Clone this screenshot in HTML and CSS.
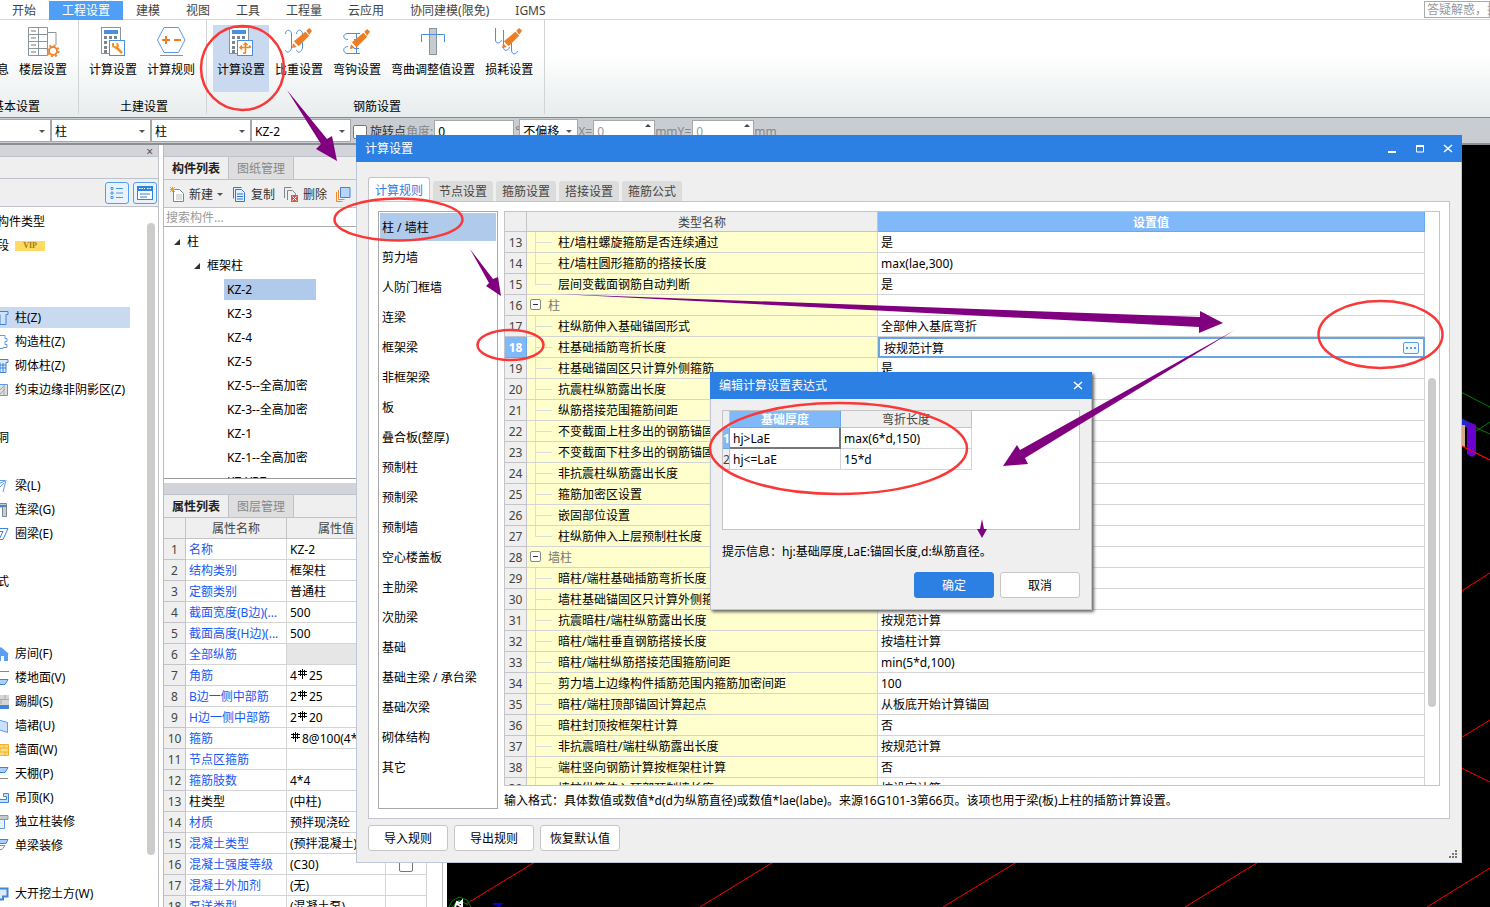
FILE: index.html
```html
<!DOCTYPE html>
<html lang="zh-CN">
<head>
<meta charset="utf-8">
<title>计算设置</title>
<link rel="stylesheet" href="styles.css">
</head>
<body>
<svg class="defs" aria-hidden="true">
  <symbol id="rebar" viewBox="0 0 10 10"><path d="M4.500 0v10M2.500 1v6M6.500 1v6M0 2.500h9M0 5.500h9" fill="none" stroke="#000"/></symbol>
  <symbol id="calc" viewBox="0 0 30 30"><rect x="3.5" y="0.5" width="19" height="26" fill="#fff" stroke="#8a949c"/><rect x="6" y="3" width="14" height="4" fill="#4a8fe0"/><path d="M6 10.5h14M6 15.5h14M6 20.5h5M6 24.500h5" stroke="#7b858d" stroke-width="3" stroke-dasharray="3 2"/></symbol>
  <symbol id="pencil" viewBox="0 0 22 22"><path d="M0 21l1-5 4 4z" fill="#ef7d24"/><path d="M2 14L14 4l4 4L7 19z" fill="#ef7d24"/><path d="M15 3l3-3 3 3-3 4z" fill="#ef7d24"/></symbol>
</svg>
<div class="app">
  <nav class="menu">
    <button>开始</button><button class="on">工程设置</button><button>建模</button><button>视图</button><button>工具</button><button>工程量</button><button>云应用</button><button>协同建模(限免)</button><button>IGMS</button>
    <input class="help" aria-label="搜索" placeholder="答疑解惑，搜索">
  </nav>

  <div class="ribbon">
    <section class="group first">
      <div class="tools">
        <button class="tool"><svg width="30" height="30"></svg>工程信息</button>
        <button class="tool"><svg width="34" height="30" viewBox="0 0 34 30"><path d="M2.500.5h19v28h-19zM12.500 0v28M2 7.500h19M2 14.500h19M2 21.500h19M22 5.500h8V18" fill="none" stroke="#8a949c"/><path d="M5 4h5M5 11h5M5 18h5M5 25h5" stroke="#777"/><circle cx="27" cy="24" r="4" fill="#fff" stroke="#ee8636" stroke-width="2"/><circle cx="27" cy="24" r="5.500" fill="none" stroke="#ee8636" stroke-width="2" stroke-dasharray="2 2.300"/></svg>楼层设置</button>
      </div>
      <h2>基本设置</h2>
    </section>
    <section class="group">
      <div class="tools">
        <button class="tool"><svg width="30" height="30" viewBox="0 0 30 30"><use href="#calc"/><rect x="11.500" y="13.500" width="15" height="15" fill="#fff" stroke="#4a8fe0"/><path d="M18 20l6 6" stroke="#f0912f" stroke-width="2.500"/><path d="M15 16v3l3 2 2-2-1-3" fill="none" stroke="#f0912f" stroke-width="2"/></svg>计算设置</button>
        <button class="tool"><svg width="30" height="30" viewBox="0 0 30 30"><path d="M8 .5h14.500L29 13l-6.500 12.500H8L1.500 13zM4 28.500h23" fill="none" stroke="#5b9bea"/><path d="M6 13h8M10 9v8M18 13h7" stroke="#ef7d24" stroke-width="2"/></svg>计算规则</button>
      </div>
      <h2>土建设置</h2>
    </section>
    <section class="group">
      <div class="tools">
        <button class="tool on"><svg width="30" height="30" viewBox="0 0 30 30"><use href="#calc"/><rect x="11.500" y="13.500" width="15" height="15" fill="#fff" stroke="#4a8fe0"/><path d="M19.500 17v9M17.500 18l2-2 2 2M15 20.500h9M16 18.500l-2 2 2 2M23 18.500l2 2M17 26h3" fill="none" stroke="#f0861f" stroke-width="1.500"/></svg>计算设置</button>
        <button class="tool"><svg width="30" height="30" viewBox="0 0 30 30"><path d="M1.500 7c0-5 6-5 6 0v13c0 5-5 7-6 3M12.500 7c0-5 6-5 6 0v13c0 5-5 7-6 3" fill="none" stroke="#4a8fe0"/><use href="#pencil" x="8" y="1" width="21" height="21"/></svg>比重设置</button>
        <button class="tool"><svg width="30" height="30" viewBox="0 0 30 30"><path d="M18 6.500H5c-5 1-4 6 1 6M18 26.500H5c-5-1-4-7 1-7M14.500 6v20M12 12.500h5M12 21.500h5" fill="none" stroke="#4a8fe0"/><use href="#pencil" x="8" y="2" width="21" height="21"/></svg>弯钩设置</button>
        <button class="tool"><svg width="30" height="30" viewBox="0 0 30 30"><rect x="11.500" y="1.500" width="7" height="26" fill="#c6cbd0" stroke="#8a949c"/><path d="M3.500 15V7.500h23V15" fill="none" stroke="#4a8fe0"/></svg>弯曲调整值设置</button>
        <button class="tool"><svg width="30" height="30" viewBox="0 0 30 30"><path d="M1.500 1v12c0 4 5 4 6 0M9.500 3v17c0 5 5 4 6 0M17.500 14v9c0 5 5 5 6 1" fill="none" stroke="#4a8fe0"/><use href="#pencil" x="8" y="1" width="21" height="21"/></svg>损耗设置</button>
      </div>
      <h2>钢筋设置</h2>
    </section>
  </div>

  <div class="options">
    <span class="combo lead"><select aria-label="楼层"><option></option></select></span>
    <span class="combo"><select aria-label="类别"><option>柱</option></select></span>
    <span class="combo"><select aria-label="类型"><option>柱</option></select></span>
    <span class="combo"><select aria-label="构件"><option>KZ-2</option></select></span>
    <label class="check"><input type="checkbox">旋转点</label>
    <label class="dim">角度:<input class="angle" value="0"></label><span class="deg">°</span>
    <span class="combo short"><select aria-label="偏移"><option>不偏移</option></select></span>
    <label class="dim spin">X=<input value="0"></label><span class="dim">mm</span>
    <label class="dim spin">Y=<input value="0"></label><span class="dim">mm</span>
  </div>

  <main class="work">
    <aside class="nav">
      <div class="cap"><button aria-label="关闭">×</button></div>
      <div class="blank"></div>
      <div class="views">
        <button aria-label="列表"><svg width="14" height="14" viewBox="0 0 14 14"><path d="M1 1.500h2v2H1zM1 6h2v2H1zM1 10.500h2v2H1zM6 2.500h7M6 7h7M6 11.500h7" fill="none" stroke="#4a97ea"/></svg></button>
        <button aria-label="窗口"><svg width="16" height="14" viewBox="0 0 16 14"><rect x=".5" y=".5" width="15" height="13" fill="#fff" stroke="#2e83de"/><path d="M0 0h16v5H0z" fill="#2e83de"/><path d="M2 2.500h6M10 2.500h4" stroke="#fff" stroke-dasharray="1.500 1"/><path d="M3 8h10M3 11h7" stroke="#2e83de"/></svg></button>
      </div>
      <div class="navbody">
        <ul class="types">
          <li>构件类型</li>
          <li>段<b class="vip">VIP</b></li>
          <li></li><li></li>
          <li class="sel"><svg viewBox="0 0 12 14"><path d="M0 .5h11v3h-2v10H3v-10" fill="#cfe2fa" stroke="#3f86d8"/></svg>柱(Z)</li>
          <li><svg viewBox="0 0 12 14"><path d="M2 .5h6v3h2v3H8v3h2v3H6v1H2" fill="#fff" stroke="#5b9bea"/></svg>构造柱(Z)</li>
          <li><svg viewBox="0 0 12 14"><path d="M0 .5h11v3h-2v10H3v-10M3 6h6M3 9h6M6 4v9" fill="#dceafa" stroke="#3f86d8"/></svg>砌体柱(Z)</li>
          <li><svg viewBox="0 0 12 14"><path d="M0 1.500h10.500v11H0" fill="#ddd" stroke="#5b9bea"/><path d="M1 9l6-6M2 12l6-6M7 2v10" stroke="#aaa"/></svg>约束边缘非阴影区(Z)</li>
          <li></li><li>洞</li><li></li>
          <li><svg viewBox="0 0 12 14"><path d="M0 1.500h8M9 1L6 13M1 5l7-3M2 9l5-5" fill="none" stroke="#5b9bea"/></svg>梁(L)</li>
          <li><svg viewBox="0 0 12 14"><path d="M0 .5h9.500v13h-4V4H0z" fill="#c8cdd2" stroke="#7b8790"/><path d="M0 3h9" stroke="#3f86d8" stroke-width="2"/></svg>连梁(G)</li>
          <li><svg viewBox="0 0 12 14"><path d="M0 1.500h11l-5 11H2l4-8H0" fill="#fff" stroke="#3f86d8"/></svg>圈梁(E)</li>
          <li></li><li>式</li><li></li><li></li>
          <li><svg viewBox="0 0 12 14"><path d="M0 4l4-4 8 7h-1v7H7V9H4v5H0z" fill="#5c9ff0"/></svg>房间(F)</li>
          <li><svg viewBox="0 0 12 14"><path d="M0 .5h12" stroke="#888"/><path d="M0 8.500h11l-3 5H0z" fill="#a9ceff" stroke="#3f86d8"/></svg>楼地面(V)</li>
          <li><svg viewBox="0 0 12 14"><path d="M0 0h12v10H0z" fill="#d5d5d5"/><path d="M0 4.500h12M8 0v4M4 5v4" stroke="#aaa"/><path d="M0 10h12v4H0z" fill="#3f86d8"/></svg>踢脚(S)</li>
          <li><svg viewBox="0 0 12 14"><path d="M0 .5l10.500 3v10L0 10" fill="#cbe1fb" stroke="#5b9bea"/></svg>墙裙(U)</li>
          <li><svg viewBox="0 0 12 14"><path d="M0 1.500h11.500v11H0M0 5h11M0 9h11M7 1v4M3 5v4M8 9v4" fill="#ffe08a" stroke="#f5ae1c"/></svg>墙面(W)</li>
          <li><svg viewBox="0 0 12 14"><path d="M0 .5h11l-3 5H0z" fill="#a9ceff" stroke="#3f86d8"/><path d="M0 11.500h11" stroke="#888"/></svg>天棚(P)</li>
          <li><svg viewBox="0 0 12 14"><path d="M0 11.500h11.500v-9h-5v3h3v3H0z" fill="#cfe2fa" stroke="#3f86d8"/></svg>吊顶(K)</li>
          <li><svg viewBox="0 0 12 14"><path d="M0 .5h11v4H0z" fill="#c5cacd" stroke="#8a949c"/><path d="M2.500 4.500h5v9h-5z" fill="#e9f2fd" stroke="#5b9bea"/></svg>独立柱装修</li>
          <li><svg viewBox="0 0 12 14"><path d="M0 .5h11l-2 4H0z" fill="#a9ceff" stroke="#3f86d8"/><path d="M0 6.500h8l-3 4H3l-1 3" fill="none" stroke="#8a949c"/></svg>单梁装修</li>
          <li></li>
          <li><svg viewBox="0 0 12 14"><path d="M0 1.500h10.500v8H6v3H1" fill="#dceafa" stroke="#3f86d8" stroke-width="2"/></svg>大开挖土方(W)</li>
        </ul>
        <i class="bar"></i>
      </div>
    </aside>

    <section class="side">
      <div class="cap"></div>
      <div class="tabs"><button class="on">构件列表</button><button>图纸管理</button></div>
      <div class="acts">
        <button><svg width="15" height="15" viewBox="0 0 15 15"><path d="M3.500 2.500h6l4 4v8h-10z" fill="#fff" stroke="#7b8790"/><path d="M6 8h6M6 10h6M6 12h6" stroke="#bbb"/><path d="M0 0l5 5M5 0L0 5M2.500 0v5M0 2.500h5" stroke="#f09a2c"/></svg>新建<i class="tri"></i></button>
        <button><svg width="15" height="15" viewBox="0 0 15 15"><path d="M1.500 11.500V.5h8M3.500 2.500h6l3 3v9h-9z" fill="#e4effd" stroke="#2f79cf"/><path d="M5 7h6M5 9.500h6M5 12h6" stroke="#2f79cf"/></svg>复制</button>
        <button><svg width="15" height="15" viewBox="0 0 15 15"><path d="M.5 11V.5h7M3.500 13V3.500h5l3 3V8" fill="none" stroke="#7b8790"/><path d="M7 8h7v7H7z" fill="#d9534f"/><path d="M8.500 9.500l4 4M12.500 9.500l-4 4" stroke="#fff"/></svg>删除</button>
        <button aria-label="层间复制"><svg width="15" height="15" viewBox="0 0 15 15"><path d="M.5 5v9.500h6M2.500 3v9.500h6" fill="none" stroke="#ee8636"/><path d="M4.500.5h9.500v10H4.500z" fill="#b6d5fc" stroke="#3f86d8"/></svg></button>
      </div>
      <input class="find" aria-label="搜索构件" placeholder="搜索构件...">
      <ul class="tree">
        <li class="l1"><i></i>柱</li>
        <li class="l2"><i></i>框架柱</li>
        <li><span class="sel">KZ-2</span></li><li><span>KZ-3</span></li><li><span>KZ-4</span></li><li><span>KZ-5</span></li><li><span>KZ-5--全高加密</span></li><li><span>KZ-3--全高加密</span></li><li><span>KZ-1</span></li><li><span>KZ-1--全高加密</span></li><li><span>KZ-YBZ</span></li>
      </ul>
      <div class="cap low"></div>
      <div class="tabs"><button class="on">属性列表</button><button>图层管理</button></div>
      <div class="propbox">
      <table class="grid props">
        <colgroup><col class="c0"><col class="c1"><col class="c2"><col class="c3"></colgroup>
        <tr><th></th><th>属性名称</th><th>属性值</th><th>附加</th></tr>
        <tr><th>1</th><td>名称</td><td>KZ-2</td><td></td></tr>
        <tr><th>2</th><td>结构类别</td><td>框架柱</td><td></td></tr>
        <tr><th>3</th><td>定额类别</td><td>普通柱</td><td></td></tr>
        <tr><th>4</th><td>截面宽度(B边)(...</td><td>500</td><td></td></tr>
        <tr><th>5</th><td>截面高度(H边)(...</td><td>500</td><td></td></tr>
        <tr><th>6</th><td>全部纵筋</td><td class="off"></td><td></td></tr>
        <tr><th>7</th><td>角筋</td><td>4<svg class="rb"><use href="#rebar"/></svg>25</td><td></td></tr>
        <tr><th>8</th><td>B边一侧中部筋</td><td>2<svg class="rb"><use href="#rebar"/></svg>25</td><td></td></tr>
        <tr><th>9</th><td>H边一侧中部筋</td><td>2<svg class="rb"><use href="#rebar"/></svg>20</td><td></td></tr>
        <tr><th>10</th><td>箍筋</td><td><svg class="rb"><use href="#rebar"/></svg>8@100(4*4)</td><td></td></tr>
        <tr><th>11</th><td>节点区箍筋</td><td></td><td></td></tr>
        <tr><th>12</th><td>箍筋肢数</td><td>4*4</td><td></td></tr>
        <tr><th>13</th><td class="blk">柱类型</td><td>(中柱)</td><td></td></tr>
        <tr><th>14</th><td>材质</td><td>预拌现浇砼</td><td></td></tr>
        <tr><th>15</th><td>混凝土类型</td><td>(预拌混凝土)</td><td></td></tr>
        <tr><th>16</th><td>混凝土强度等级</td><td>(C30)</td><td class="tick"><input type="checkbox" aria-label="附加"></td></tr>
        <tr><th>17</th><td>混凝土外加剂</td><td>(无)</td><td></td></tr>
        <tr><th>18</th><td>泵送类型</td><td>(混凝土泵)</td><td></td></tr>
      </table>
      </div>
    </section>

    <section class="view3d" aria-label="三维视图">
      <svg viewBox="447 145 1043 762" preserveAspectRatio="xMinYMin slice">
        <g stroke="#f00" fill="none"><path d="M466 904L540 859M700 907L780 858M943 907L1025 857M1185 907L1490 720M1427 907L1490 868M1455 595L1490 573M1455 765L1490 782M1455 443L1490 460"/></g>
        <g stroke="#007d00" fill="none"><path d="M1455 389L1490 407M1470 425l20 9M1476 431l14-9"/><path d="M449 907l3-6 7-4 8 3 4 7M452 907l7-7 9 5"/></g>
        <path d="M1455 415l20 10-14 4-6-2z" fill="#2525cd"/><path d="M1455 425h10v22l-10-3z" fill="#d3aa88"/><path d="M1467 426l4-3 5 2v29l-4 3-5-3z" fill="#6a00d0"/><path d="M1462 446l28 14" stroke="#f00"/>
        <path d="M455 907l2-5 3 1 2-2v6M457 904l5 3" stroke="#fff" stroke-width="2" fill="none"/><path d="M493 904h8l-4 4" stroke="#0000d0" stroke-width="2" fill="none"/>
      </svg>
    </section>
  </main>
</div>

<section class="window settings" role="dialog" aria-label="计算设置">
  <header><h1>计算设置</h1>
    <button aria-label="最小化"><svg width="10" height="10" viewBox="0 0 10 10"><path d="M1 8h8" stroke="#fff" stroke-width="2"/></svg></button>
    <button aria-label="最大化"><svg width="10" height="10" viewBox="0 0 10 10"><path d="M1.500 2h7v6h-7z" fill="none" stroke="#fff"/><path d="M1 2h8" stroke="#fff" stroke-width="2"/></svg></button>
    <button aria-label="关闭"><svg width="10" height="10" viewBox="0 0 10 10"><path d="M1 1l8 7M9 1L1 8" stroke="#fff" stroke-width="1.500"/></svg></button>
  </header>
  <div class="content">
    <div class="stabs"><button class="on">计算规则</button><button>节点设置</button><button>箍筋设置</button><button>搭接设置</button><button>箍筋公式</button></div>
    <div class="sheet">
      <ul class="cats"><li class="sel">柱 / 墙柱</li><li>剪力墙</li><li>人防门框墙</li><li>连梁</li><li>框架梁</li><li>非框架梁</li><li>板</li><li>叠合板(整厚)</li><li>预制柱</li><li>预制梁</li><li>预制墙</li><li>空心楼盖板</li><li>主肋梁</li><li>次肋梁</li><li>基础</li><li>基础主梁 / 承台梁</li><li>基础次梁</li><li>砌体结构</li><li>其它</li></ul>
      <div class="right">
        <div class="gridbox">
          <table class="grid rules">
            <colgroup><col class="c0"><col class="c1"><col></colgroup>
            <tr><th></th><th>类型名称</th><th class="hot">设置值</th></tr>
            <tr><th>13</th><td>柱/墙柱螺旋箍筋是否连续通过</td><td>是</td></tr>
            <tr><th>14</th><td>柱/墙柱圆形箍筋的搭接长度</td><td>max(lae,300)</td></tr>
            <tr class="last"><th>15</th><td>层间变截面钢筋自动判断</td><td>是</td></tr>
            <tr class="grp"><th>16</th><td><i></i>柱</td><td></td></tr>
            <tr><th>17</th><td>柱纵筋伸入基础锚固形式</td><td>全部伸入基底弯折</td></tr>
            <tr><th class="hot">18</th><td>柱基础插筋弯折长度</td><td class="edit"><div><input aria-label="柱基础插筋弯折长度" value="按规范计算"><button aria-label="编辑表达式"><i></i><i></i><i></i></button></div></td></tr>
            <tr><th>19</th><td>柱基础锚固区只计算外侧箍筋</td><td>是</td></tr>
            <tr><th>20</th><td>抗震柱纵筋露出长度</td><td>按规范计算</td></tr>
            <tr><th>21</th><td>纵筋搭接范围箍筋间距</td><td>min(5*d,100)</td></tr>
            <tr><th>22</th><td>不变截面上柱多出的钢筋锚固</td><td>1.2*lae</td></tr>
            <tr><th>23</th><td>不变截面下柱多出的钢筋锚固</td><td>1.2*lae</td></tr>
            <tr><th>24</th><td>非抗震柱纵筋露出长度</td><td>按规范计算</td></tr>
            <tr><th>25</th><td>箍筋加密区设置</td><td>按规范计算</td></tr>
            <tr><th>26</th><td>嵌固部位设置</td><td>按设定计算</td></tr>
            <tr class="last"><th>27</th><td>柱纵筋伸入上层预制柱长度</td><td>8*d</td></tr>
            <tr class="grp"><th>28</th><td><i></i>墙柱</td><td></td></tr>
            <tr><th>29</th><td>暗柱/端柱基础插筋弯折长度</td><td>按规范计算</td></tr>
            <tr><th>30</th><td>墙柱基础锚固区只计算外侧箍筋</td><td>否</td></tr>
            <tr><th>31</th><td>抗震暗柱/端柱纵筋露出长度</td><td>按规范计算</td></tr>
            <tr><th>32</th><td>暗柱/端柱垂直钢筋搭接长度</td><td>按墙柱计算</td></tr>
            <tr><th>33</th><td>暗柱/端柱纵筋搭接范围箍筋间距</td><td>min(5*d,100)</td></tr>
            <tr><th>34</th><td>剪力墙上边缘构件插筋范围内箍筋加密间距</td><td>100</td></tr>
            <tr><th>35</th><td>暗柱/端柱顶部锚固计算起点</td><td>从板底开始计算锚固</td></tr>
            <tr><th>36</th><td>暗柱封顶按框架柱计算</td><td>否</td></tr>
            <tr><th>37</th><td>非抗震暗柱/端柱纵筋露出长度</td><td>按规范计算</td></tr>
            <tr><th>38</th><td>端柱竖向钢筋计算按框架柱计算</td><td>否</td></tr>
            <tr><th>39</th><td>墙柱纵筋伸入顶部预制墙长度</td><td>按设定计算</td></tr>
          </table>
          <div class="track"><i></i></div>
        </div>
        <p>输入格式：具体数值或数值*d(d为纵筋直径)或数值*lae(labe)。来源16G101-3第66页。该项也用于梁(板)上柱的插筋计算设置。</p>
      </div>
    </div>
    <footer><button class="btn">导入规则</button><button class="btn">导出规则</button><button class="btn">恢复默认值</button>
      <svg class="grip" width="9" height="9" viewBox="0 0 9 9"><path d="M6 0h2v2H6zM6 3h2v2H6zM3 3h2v2H3zM0 6h2v2H0zM3 6h2v2H3zM6 6h2v2H6z" fill="#777"/></svg></footer>
  </div>
</section>

<section class="window expr" role="dialog" aria-label="编辑计算设置表达式">
  <header><h1>编辑计算设置表达式</h1><button aria-label="关闭"><svg width="10" height="10" viewBox="0 0 10 10"><path d="M1 1l8 7M9 1L1 8" stroke="#fff" stroke-width="1.500"/></svg></button></header>
  <div class="content">
    <div class="exprbox">
      <table class="grid cond">
        <colgroup><col class="c0"><col class="c1"><col class="c2"></colgroup>
        <tr><th></th><th class="hot">基础厚度</th><th>弯折长度</th></tr>
        <tr><th class="hot">1</th><td class="cur">hj&gt;LaE</td><td>max(6*d,150)</td></tr>
        <tr><th>2</th><td>hj&lt;=LaE</td><td>15*d</td></tr>
      </table>
    </div>
    <p>提示信息：hj:基础厚度,LaE:锚固长度,d:纵筋直径。</p>
    <footer><button class="btn ok">确定</button><button class="btn">取消</button></footer>
  </div>
</section>

<svg class="marks" aria-hidden="true">
  <g fill="none" stroke="#fb3838" stroke-width="2.500">
    <ellipse cx="242.500" cy="68" rx="41.500" ry="42"/><ellipse cx="398.500" cy="219.500" rx="64" ry="21"/><ellipse cx="510.500" cy="345" rx="33" ry="15"/><ellipse cx="1380.500" cy="334.500" rx="62" ry="33.500"/><ellipse cx="838.500" cy="448.500" rx="128.500" ry="45.500"/>
  </g>
  <g fill="#800080">
    <path d="M287 90L327 139 332 136 337 161 316 149 321 144z"/>
    <path d="M470 249L493 279 498 277 501 296 486 286 489 283z"/>
    <path d="M558 294L1200 317V311L1223 323 1199 333V327z"/>
    <path d="M1235 330L1025 458 1028 464 1003 466 1017 445 1020 450z"/>
    <path d="M982 519L984 529H987L982 538 977 529H980z"/>
  </g>
</svg>
</body>
</html>
```
FILE: styles.css
```css
* { box-sizing: border-box; }
body { margin: 0; overflow: hidden; font: 12px/20px "Noto Sans", "Noto Sans CJK SC", sans-serif; color: #000; background: #fff; }
button, input, select { font: inherit; color: inherit; margin: 0; padding: 0; border: 0; background: none; border-radius: 0; }
ul, h1, h2, p { margin: 0; padding: 0; list-style: none; font-size: 12px; font-weight: 400; }
svg { display: block; flex: none; }
.defs { position: absolute; width: 0; height: 0; }
.app { display: flex; flex-direction: column; height: 100vh; overflow: hidden; }

.menu { display: flex; height: 20px; background: #fff; border-bottom: 1px solid #d5d5d5; color: #444; }
.menu button { padding: 2px 13px 0; line-height: 18px; white-space: nowrap; }
.menu button:first-child { padding-left: 12px; }
.menu .on { background: #4e9ff5; color: #fff; margin-top: 1px; padding-top: 1px; height: 19px; }
.help { margin: 1px 0 0 auto; width: 66px; height: 17px; border: 1px solid #aaa; padding-left: 2px; }
::placeholder { color: #999; opacity: 1; }

.ribbon { display: flex; height: 98px; background: linear-gradient(#fff 35%, #e7ecec); border-bottom: 1px solid #84898b; }
.group { display: flex; flex-direction: column; padding: 5px 7px 0 6px; border-right: 1px solid #d0d4d6; margin-bottom: 3px; }
.first { margin-left: -47px; padding-left: 4px; }
.tools { display: flex; gap: 2px; }
.tool { display: flex; flex-direction: column; align-items: center; height: 67px; padding: 2px 4px 0; gap: 3px; white-space: nowrap; }
.tool.on { background: #c8d9f0; }
.group h2 { text-align: center; line-height: 30px; padding-left: 4px; }

.options { display: flex; align-items: center; height: 27px; background: #c9ccd1; border-bottom: 2px solid #8c8f93; }
.combo { position: relative; width: 100px; height: 23px; }
.combo::after, .tri { content: ""; border: 3px solid transparent; border-top-color: #555; border-bottom: 0; }
.combo::after { position: absolute; right: 6px; top: 11px; pointer-events: none; }
.combo select { appearance: none; width: 100%; height: 23px; background: #fff; border: 1px solid #a5a7aa; padding: 2px 0 0 3px; }
.lead { margin-left: -49px; }
.short { width: 59px; }
.check { display: flex; align-items: center; gap: 3px; margin-left: 2px; padding-top: 2px; color: #333; }
.check input, .tick input { appearance: none; width: 14px; height: 14px; border: 1px solid #777; border-radius: 2px; background: #fff; }
.dim { color: #85888c; white-space: nowrap; padding-top: 2px; }
.dim input { width: 62px; height: 23px; border: 1px solid #a5a7aa; background: #fff; padding-left: 3px; color: #999; margin-left: 1px; }
.dim .angle { width: 80px; color: #000; }
.deg { color: #777; margin-left: 1px; width: 4px; }
.spin { position: relative; }
.spin::after { content: ""; position: absolute; right: 4px; top: 6px; border: 3px solid transparent; border-bottom-color: #444; border-top: 0; }

.work { display: flex; flex: 1; min-height: 0; }
.nav { width: 159px; border-right: 1px solid #c0c2c8; margin-right: 4px; display: flex; flex-direction: column; flex: none; overflow: hidden; }
.cap { height: 12px; flex: none; background: #d2d4da; border-bottom: 1px solid #bfc2c9; text-align: right; }
.cap button { display: block; margin-left: auto; padding: 1px 5px 0 0; line-height: 12px; color: #555; }
.blank { height: 22px; background: #efefef; border-bottom: 1px solid #bfc2c9; flex: none; }
.views { height: 28px; flex: none; background: #efefef; border-bottom: 1px solid #bfc2c9; display: flex; justify-content: flex-end; align-items: center; gap: 4px; padding-right: 1px; }
.views button { display: grid; place-items: center; width: 24px; height: 22px; border: 1px solid #4e9ff5; border-radius: 3px; background: #eaf3fd; }
.navbody { display: flex; flex: 1; min-height: 0; }
.types { width: 130px; flex: none; padding-top: 3px; }
.types li { display: flex; align-items: center; gap: 6px; height: 24px; margin-left: -3px; white-space: nowrap; }
.types li.sel { background: #c8d9f0; background-clip: content-box; padding: 1px 0 2px; }
.types svg { width: 12px; height: 14px; }
.vip { width: 30px; height: 10px; background: #fedb63; color: #a5781a; font: bold 8px/10px "Liberation Serif", serif; text-align: center; }
.bar { width: 8px; margin: 16px 0 52px 17px; border-radius: 4px; background: #ccc; }

.side { width: 280px; flex: none; display: flex; flex-direction: column; border: solid #bbb; border-width: 0 1px; overflow: hidden; margin-right: 4px; }
.tabs { display: flex; flex: none; height: 23px; background: #efefef; border-bottom: 1px solid #bfc2c9; }
.tabs button { width: 65px; border-right: 1px solid #bfc2c9; color: #888; background: #dedede; padding-top: 2px; }
.tabs .on { background: #efefef; color: #222; font-weight: 700; }
.acts { display: flex; align-items: center; height: 28px; flex: none; gap: 9px; padding: 2px 0 0 6px; background: #efefef; border-bottom: 1px solid #bfc2c9; color: #333; }
.acts button { display: flex; align-items: center; gap: 4px; white-space: nowrap; }
.find { height: 19px; flex: none; border-bottom: 1px solid #aaa; padding: 2px 0 0 2px; }
.tree { height: 252px; flex: none; overflow: hidden; padding-top: 2px; border-bottom: 1px solid #999; }
.tree li { display: flex; align-items: center; height: 24px; padding-left: 60px; }
.tree span { width: 92px; padding-left: 3px; line-height: 21px; white-space: nowrap; }
.tree .sel { background: #b0caec; }
.tree i { border: 3px solid #333; border-left-color: transparent; border-top-color: transparent; margin-right: 7px; }
.tree .l1 { padding: 1px 0 0 10px; }
.tree .l2 { padding: 1px 0 0 30px; }
.low { margin-top: 4px; }
.propbox { overflow: hidden; flex: 1; }

.grid { border-collapse: separate; border-spacing: 0; table-layout: fixed; }
.grid th, .grid td { height: 21px; padding: 2px 0 0; line-height: 18px; border: solid #d4d4d4; border-width: 0 1px 1px 0; white-space: nowrap; overflow: hidden; text-align: left; }
.grid th { font-weight: 400; text-align: center; background: #efefef; color: #444; border-color: #c3c3c8; }
.grid td { padding-left: 3px; }
.grid th.hot { background: #7fb9fa; color: #fff; font-weight: 700; border-color: #68a9ea; }
.props { width: 263px; }
.props .c0 { width: 22px; }
.props .c1 { width: 101px; }
.props .c2 { width: 99px; }
.props .c3 { width: 41px; }
.props td:nth-child(2) { color: #1758f5; }
.props td.blk { color: #000; }
.props .off { background: #e6e6e6; }
.props .tick { padding: 0; text-align: center; }
.tick input { vertical-align: middle; }
.rb { display: inline-block; width: 10px; height: 10px; margin: 0 1px; vertical-align: 1px; }

.view3d { flex: 1; min-width: 0; background: #000; overflow: hidden; }
.view3d svg { width: 100%; height: 100%; }

.window { position: absolute; display: flex; flex-direction: column; background: #efefef; border: 1px solid #bfc6d6; border-top: 0; }
.window header { display: flex; align-items: center; height: 27px; flex: none; margin: 0 -1px; padding: 0 9px; background: #2d80e3; color: #fff; }
.window h1 { flex: 1; }
.window header button { width: 10px; height: 10px; margin-left: 18px; }
.window .content { display: flex; flex-direction: column; flex: 1; min-height: 0; padding: 15px 11px 11px; }
.settings { left: 356px; top: 135px; right: 28px; bottom: 44px; }
.stabs { display: flex; align-items: flex-end; gap: 3px; height: 25px; flex: none; margin-bottom: -1px; }
.stabs button { width: 60px; height: 20px; margin-bottom: 1px; padding-top: 1px; border-radius: 3px 3px 0 0; background: #dcdcdc; color: #444; }
.stabs .on { width: 62px; height: 25px; margin: 0; padding-top: 2px; background: #fff; border: 1px solid #c3c3c8; border-bottom: 0; color: #2d80e3; }
.sheet { display: flex; gap: 6px; flex: 1; min-height: 0; background: #fff; border: 1px solid #c3c6cc; padding: 9px; }
.cats { width: 120px; flex: none; border: 1px solid #aaa; overflow: hidden; }
.cats li { height: 30px; line-height: 32px; padding-left: 3px; white-space: nowrap; }
.cats .sel { background: #b0caec; margin: 1px 1px -1px; padding-left: 2px; line-height: 30px; border-bottom: 2px solid #fff; }
.right { display: flex; flex-direction: column; flex: 1; min-width: 0; }
.gridbox { display: flex; flex: 1; min-height: 0; overflow: hidden; border: 1px solid #c3c3c8; }
.right p { height: 22px; margin-top: 1px; line-height: 27px; white-space: nowrap; }
.rules { width: 0; flex: 1; height: 0; }
.rules .c0 { width: 22px; }
.rules .c1 { width: 351px; }
.rules tr:first-child th { height: 20px; line-height: 17px; }
.rules td:nth-child(2) { background: linear-gradient(#ddd, #ddd) 8px 10px / 17px 1px no-repeat, linear-gradient(#ddd, #ddd) 8px 0 / 1px 100% no-repeat #ffffcd; padding-left: 31px; }
.rules .last td:nth-child(2) { background: linear-gradient(#ddd, #ddd) 8px 10px / 17px 1px no-repeat, linear-gradient(#ddd, #ddd) 8px 0 / 1px 10px no-repeat #ffffcd; }
.rules .grp td:nth-child(2) { background: #ffffcd; padding-left: 3px; color: #777; }
.grp i { display: inline-block; width: 11px; height: 11px; margin-right: 7px; border: 1px solid #888; border-radius: 2px; background: linear-gradient(#333, #333) center / 5px 1px no-repeat #fff; }
.grid td.edit { padding: 0; border: 0; }
.edit div { display: flex; align-items: center; height: 21px; border: 2px solid #68a5e6; padding: 0 4px; }
.edit input { flex: 1; min-width: 0; height: 17px; padding-top: 1px; line-height: 16px; }
.edit button { display: flex; align-items: center; justify-content: center; gap: 2px; width: 16px; height: 12px; border: 1px solid #5a9fe6; border-radius: 2px; background: #f2f7fd; }
.edit i { width: 2px; height: 2px; background: #5a9fe6; }
.track { display: flex; width: 14px; padding: 166px 3px 78px; }
.track i { width: 8px; border-radius: 4px; background: #ccc; }
.settings footer { position: relative; display: flex; flex: none; gap: 6px; padding-top: 6px; }
.btn { width: 80px; height: 26px; padding-top: 2px; border: 1px solid #c6c6c6; border-radius: 3px; background: #fff; }
.ok { background: #2d80e3; border-color: #2d80e3; color: #fff; }
.grip { position: absolute; right: -8px; bottom: -8px; }

.expr { left: 710px; top: 372px; width: 382px; box-shadow: 2px 2px 3px #666; }
.expr .content { padding: 11px; }
.exprbox { height: 120px; background: #fff; border: 1px solid #c3c3c8; }
.cond { width: 249px; }
.cond .c0 { width: 7px; }
.cond .c1 { width: 111px; }
.cond .c2 { width: 131px; }
.grid.cond th, .grid.cond td { padding-top: 1px; }
.grid.cond tr:first-child th { height: 17px; padding-top: 2px; line-height: 14px; }
.grid.cond td.cur { padding-top: 2px; line-height: 17px; border: solid #777; border-width: 0 2px 2px 0; }
.expr p { padding: 12px 0 10px; }
.expr footer { display: flex; justify-content: flex-end; gap: 6px; }

.marks { position: absolute; left: 0; top: 0; width: 100%; height: 100%; pointer-events: none; }
```
